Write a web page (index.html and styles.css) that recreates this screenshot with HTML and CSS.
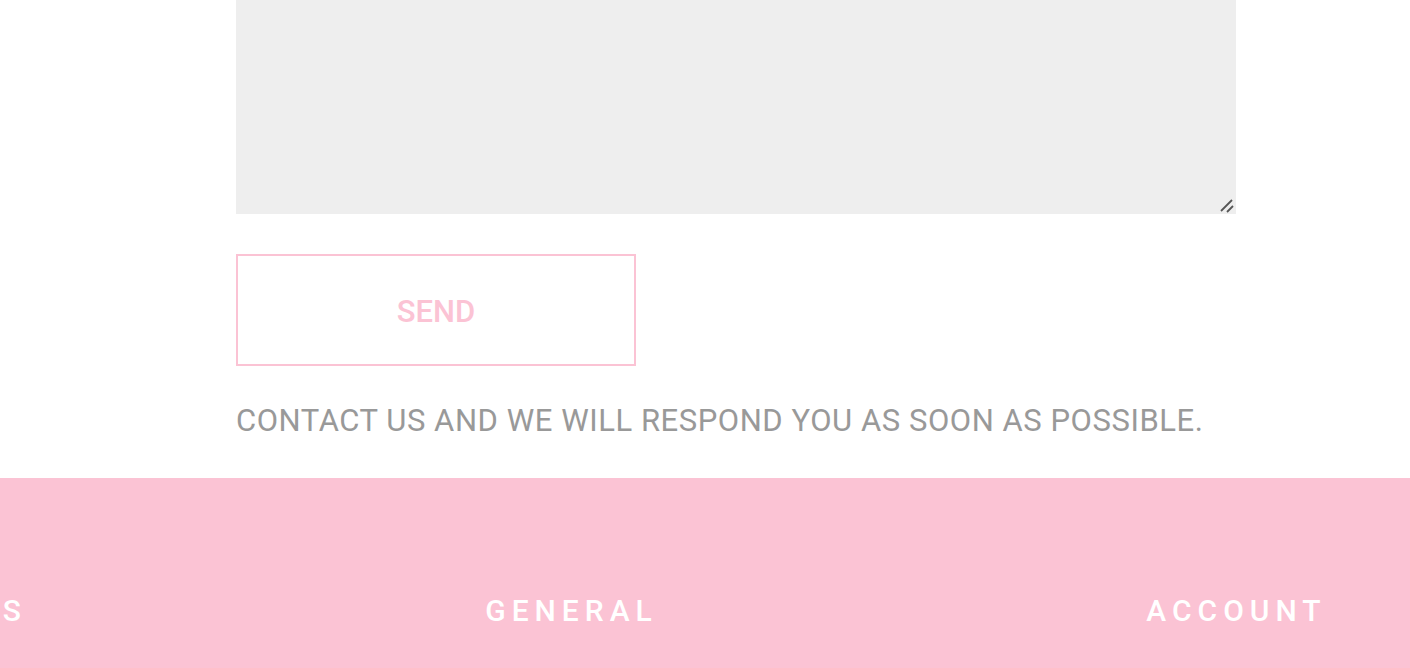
FILE: index.html
```html
<!DOCTYPE html>
<html>
<head>
<meta charset="utf-8">
<link rel="stylesheet" href="styles.css">
</head>
<body>
<main class="contact">
  <div class="field">
    <textarea class="message"></textarea>
    <svg class="grip" width="14" height="14" viewBox="0 0 14 14" aria-hidden="true">
      <line x1="1" y1="12" x2="12" y2="1" stroke="#555" stroke-width="1.8"/>
      <line x1="7" y1="13" x2="13" y2="7" stroke="#555" stroke-width="1.8"/>
    </svg>
  </div>
  <button class="send">SEND</button>
  <p class="note">CONTACT US AND WE WILL RESPOND YOU AS SOON AS POSSIBLE.</p>
</main>
<footer class="footer">
  <div class="cols">
    <h3 class="col-title first">CONTACTS</h3>
    <h3 class="col-title">GENERAL</h3>
    <h3 class="col-title">ACCOUNT</h3>
  </div>
</footer>
</body>
</html>
```
FILE: styles.css
```css
html, body {
  margin: 0;
  padding: 0;
  overflow: hidden;
  background: #fff;
  font-family: Roboto, "Liberation Sans", sans-serif;
}
.contact {
  padding-left: 236px;
  width: 1000px;
  display: flex;
  flex-direction: column;
  align-items: flex-start;
}
.field {
  position: relative;
  width: 1000px;
  height: 214px;
}
.message {
  display: block;
  width: 1000px;
  height: 214px;
  box-sizing: border-box;
  margin: 0;
  border: none;
  background: #eeeeee;
  resize: none;
  outline: none;
}
.grip {
  position: absolute;
  right: 2px;
  bottom: 1px;
}
.send {
  margin-top: 40px;
  width: 400px;
  height: 112px;
  box-sizing: border-box;
  border: 2px solid #fbc3d4;
  background: #fff;
  color: #fbc3d4;
  font-family: Roboto, "Liberation Sans", sans-serif;
  font-size: 31px;
  font-weight: 500;
  padding: 0;
  padding-top: 2px;
}
.note {
  margin: 35px 0 0 0;
  font-size: 31px;
  line-height: 40px;
  color: #999999;
  white-space: nowrap;
  height: 77px;
  letter-spacing: 0.55px;
}
.footer {
  background: #fbc3d4;
  height: 190px;
  overflow: hidden;
}
.cols {
  display: grid;
  grid-template-columns: repeat(3, 665px);
  margin-left: -426px;
  padding-top: 116px;
}
.col-title {
  margin: 0;
  text-align: center;
  color: #fff;
  font-size: 30px;
  font-weight: 500;
  letter-spacing: 6px;
  line-height: 34px;
}
.col-title.first {
  text-align: right;
  padding-right: 212px;
}
```
